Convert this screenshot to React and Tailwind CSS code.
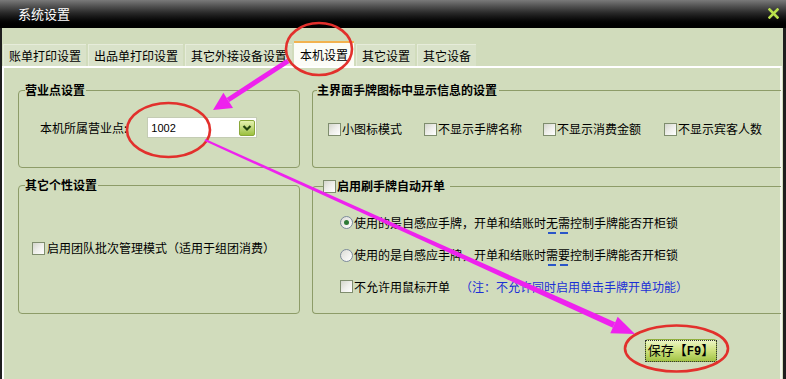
import React from "react";

function Check({ className = "" }) {
  return (
    <span
      className={
        "inline-block w-[13px] h-[13px] shrink-0 border border-[#7f8d6e] bg-gradient-to-br from-[#d4d6cc] via-[#eeeeea] to-white " +
        className
      }
    />
  );
}

function Radio({ checked }) {
  return (
    <span className="relative inline-flex items-center justify-center w-[13px] h-[13px] shrink-0 rounded-full border border-[#7d8b9c] bg-gradient-to-br from-[#dcdcd6] to-white">
      {checked && <span className="w-[5px] h-[5px] rounded-full bg-[#2e7a36]" />}
    </span>
  );
}

function Dash({ ch }) {
  return (
    <span className="relative">
      {ch}
      <span className="absolute left-[2px] right-[2px] bottom-[-3px] h-[2px] bg-[#2a56c8]" />
    </span>
  );
}

function Tab({ children, active }) {
  return active ? (
    <div className="h-[25px] mt-[-1px] px-[6px] flex items-center bg-[#fbfcf6] border-t-2 border-[#f2b24e] text-black">
      {children}
    </div>
  ) : (
    <div className="h-[22px] px-[5px] flex items-center bg-[#d9e2c9] border-t border-l border-[#e6ecda] text-black">
      {children}
    </div>
  );
}

export default function App() {
  return (
    <div className="relative w-[786px] h-[379px] overflow-hidden bg-[#d1dcbc] font-['Noto_Sans_CJK_SC','Liberation_Sans',sans-serif] text-[12px] leading-[16px] text-black">
      {/* title bar */}
      <div className="h-[28px] flex items-center justify-between pl-[18px] pr-[7px] bg-gradient-to-b from-[#7a7a7a] via-[#262626] to-black border-b border-black">
        <span className="text-white text-[13px]">系统设置</span>
        <svg width="11" height="11" viewBox="0 0 11 11">
          <path d="M1.5 1.5 L9.5 9.5 M9.5 1.5 L1.5 9.5" stroke="#b9e04c" strokeWidth="2.6" strokeLinecap="square" />
        </svg>
      </div>

      {/* body */}
      <div className="h-[351px] flex flex-col border-l-2 border-r-[3px] border-[#1e1e1e]">
        {/* tabs */}
        <div className="h-[38px] pl-[1px] flex items-end gap-[2px]">
          <Tab>账单打印设置</Tab>
          <Tab>出品单打印设置</Tab>
          <Tab>其它外接设备设置</Tab>
          <Tab active>本机设置</Tab>
          <Tab>其它设置</Tab>
          <Tab>其它设备</Tab>
        </div>

        {/* panel */}
        <div className="flex-1 border-t-2 border-l-2 border-white border-r-2 border-r-[#f4f6ee] mr-[1px] pt-[14px] pl-[14px]">
          <div className="grid grid-cols-[282px_469px] gap-x-[12px] gap-y-[9px]">
            <fieldset className="h-[86px] border border-[#8d9c68] rounded-[4px]">
              <legend className="ml-[6px] pr-[1px] font-bold leading-[16px]">营业点设置</legend>
              <div className="pt-[19px] pl-[21px] flex items-center">
                <span>本机所属营业点:</span>
                <div className="ml-[20px] w-[110px] h-[21px] bg-white border border-[#c4ccb4] flex items-center justify-between pl-[3px] pr-[1px]">
                  <span className="text-[11px] font-['Liberation_Sans',sans-serif]">1002</span>
                  <span className="w-[16px] h-[16px] flex items-center justify-center rounded-[2px] bg-gradient-to-b from-[#e6f2b0] to-[#9cc03c] border border-[#8aa83a]">
                    <svg width="10" height="8" viewBox="0 0 10 8">
                      <path d="M1.5 2 L5 5.5 L8.5 2" stroke="#21420e" strokeWidth="2.2" fill="none" />
                    </svg>
                  </span>
                </div>
              </div>
            </fieldset>

            <fieldset className="h-[86px] border border-[#8d9c68] border-r-0 rounded-l-[4px]">
              <legend className="ml-[4px] pr-[2px] font-bold leading-[16px]">主界面手牌图标中显示信息的设置</legend>
              <div className="pt-[23px] pl-[15px] flex items-center">
                <Check />
                <span className="ml-[1px]">小图标模式</span>
                <Check className="ml-[22px]" />
                <span className="ml-[1px]">不显示手牌名称</span>
                <Check className="ml-[21px]" />
                <span className="ml-[1px]">不显示消费金额</span>
                <Check className="ml-[23px]" />
                <span className="ml-[1px]">不显示宾客人数</span>
              </div>
            </fieldset>

            <fieldset className="h-[137px] border border-[#8d9c68] rounded-[4px]">
              <legend className="ml-[6px] pr-[1px] font-bold leading-[16px]">其它个性设置</legend>
              <div className="pt-[47px] pl-[13px] flex items-center">
                <Check />
                <span className="ml-[2px]">启用团队批次管理模式（适用于组团消费）</span>
              </div>
            </fieldset>

            <fieldset className="h-[136px] mt-[1px] border border-[#8d9c68] border-r-0 rounded-l-[4px]">
              <legend className="ml-[10px] pr-[5px] font-bold leading-[16px] flex items-center">
                <Check />
                <span className="ml-[1px]">启用刷手牌自动开单</span>
              </legend>
              <div className="pt-[12px] pl-[27px] flex flex-col">
                <div className="h-[33px] flex items-center">
                  <Radio checked />
                  <span className="ml-[1px]">
                    使用的是自感应手牌，开单和结账时<Dash ch="无" />
                    <Dash ch="需" />控制手牌能否开柜锁
                  </span>
                </div>
                <div className="h-[32px] flex items-center">
                  <Radio />
                  <span className="ml-[1px]">
                    使用的是自感应手牌，开单和结账时<Dash ch="需" />
                    <Dash ch="要" />控制手牌能否开柜锁
                  </span>
                </div>
                <div className="h-[31px] flex items-center">
                  <Check />
                  <span className="ml-[1px]">不允许用鼠标开单</span>
                  <span className="ml-[10px] text-[#1b2fd6]">（注：不允许同时启用单击手牌开单功能）</span>
                </div>
              </div>
            </fieldset>
          </div>

          <div className="flex justify-end pr-[63px] mt-[25px]">
            <button className="w-[72px] h-[23px] flex items-center justify-center rounded-[3px] border border-[#8fae3c] bg-gradient-to-b from-[#eef6c8] via-[#cfe27e] to-[#a2c445] text-[13px] whitespace-nowrap">
              <span className="px-[1px] leading-[16px] whitespace-nowrap outline outline-1 outline-dotted outline-[#333] outline-offset-[1px]">
                保存【<b className="font-['Liberation_Mono',monospace] text-[12px]">F9</b>】
              </span>
            </button>
          </div>
        </div>
      </div>

      {/* annotations */}
      <svg className="absolute inset-0 pointer-events-none" width="786" height="379" viewBox="0 0 786 379">
        <ellipse cx="319" cy="49" rx="33" ry="26" fill="none" stroke="#e2302c" strokeWidth="2.6" />
        <ellipse cx="168.5" cy="130" rx="41.5" ry="27" fill="none" stroke="#e2302c" strokeWidth="2.6" />
        <ellipse cx="676.5" cy="348.5" rx="51.5" ry="23" fill="none" stroke="#e2302c" strokeWidth="2.6" />
        <line x1="288" y1="61" x2="228" y2="100" stroke="#ee22ee" strokeWidth="5" />
        <polygon points="213,110 233,108 223.4,92.7" fill="#ee22ee" />
        <polygon points="204.6,140.9 205.4,139.1 615.2,322.3 612.8,327.7" fill="#ee22ee" />
        <polygon points="635,334 610.3,333.2 617.7,316.8" fill="#ee22ee" />
      </svg>
    </div>
  );
}
